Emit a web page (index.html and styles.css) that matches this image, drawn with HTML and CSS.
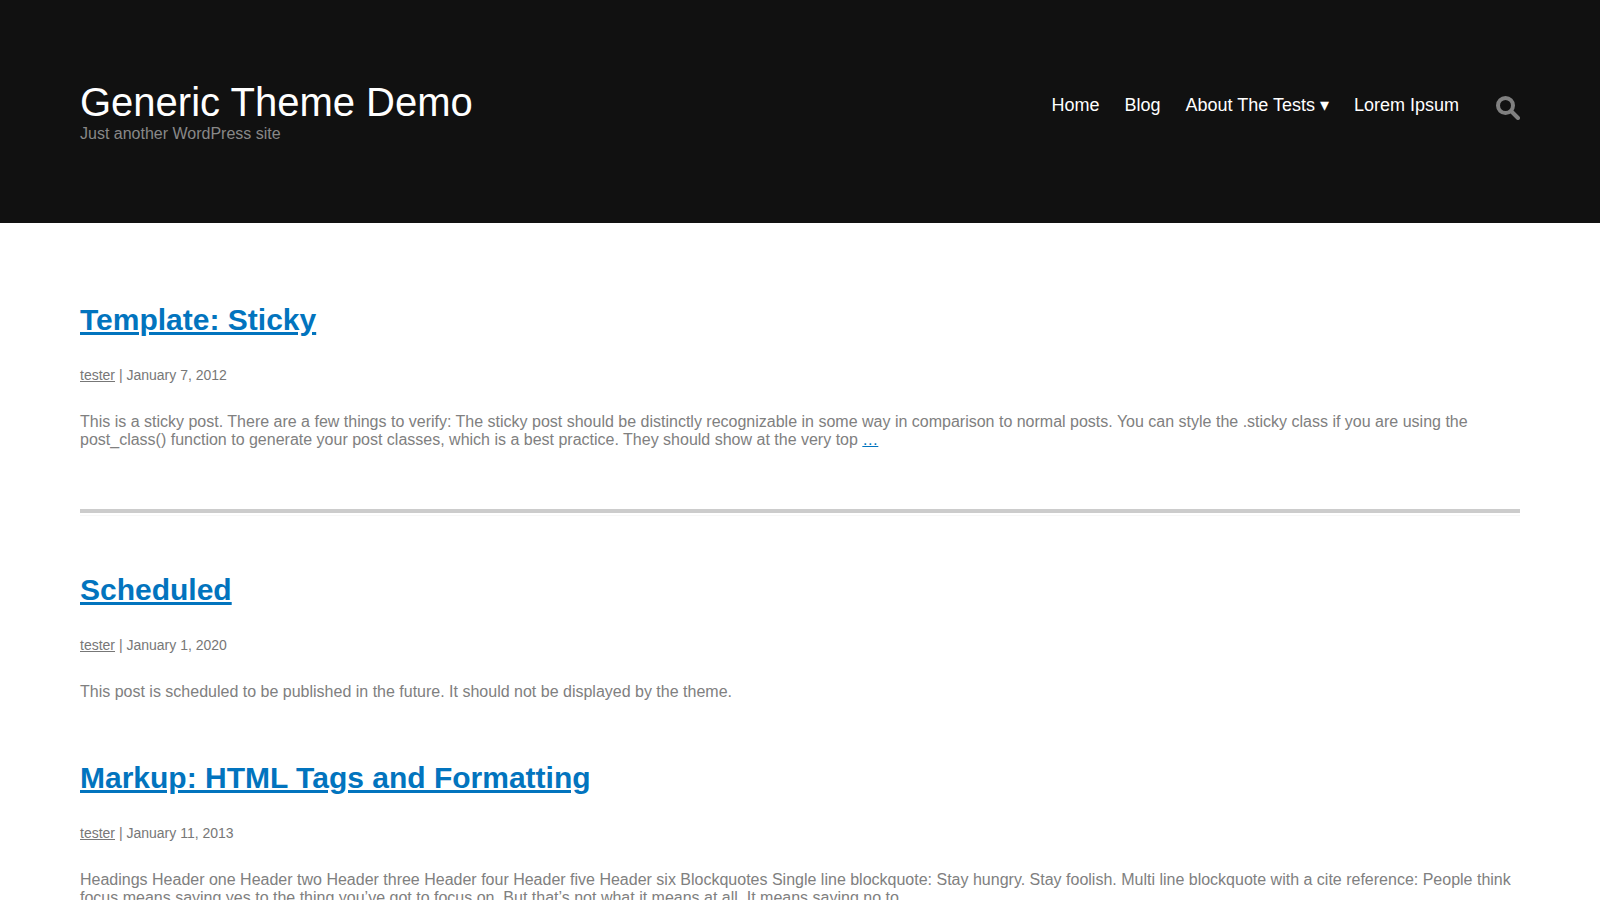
FILE: index.html
```html
<!DOCTYPE html>
<html lang="en">
<head>
<meta charset="utf-8">
<title>Generic Theme Demo</title>
<link rel="stylesheet" href="styles.css">
</head>
<body>
<header class="site-header">
  <div class="branding">
    <h1 class="site-title">Generic Theme Demo</h1>
    <p class="tagline">Just another WordPress site</p>
  </div>
  <nav class="nav">
    <a href="#">Home</a>
    <a href="#">Blog</a>
    <a href="#">About The Tests ▾</a>
    <a href="#">Lorem Ipsum</a>
    <svg class="search" viewBox="0 0 24 24" aria-hidden="true"><circle cx="9.5" cy="9.5" r="7.5" fill="none" stroke="currentColor" stroke-width="4"/><path d="M15.5 15.5l6.5 6.5" fill="none" stroke="currentColor" stroke-width="4" stroke-linecap="round"/></svg>
  </nav>
</header>
<main class="content">
  <article class="post">
    <h2 class="post-title"><a href="#">Template: Sticky</a></h2>
    <p class="meta"><a href="#">tester</a> | January 7, 2012</p>
    <p class="excerpt">This is a sticky post. There are a few things to verify: The sticky post should be distinctly recognizable in some way in comparison to normal posts. You can style the .sticky class if you are using the post_class() function to generate your post classes, which is a best practice. They should show at the very top <a href="#">…</a></p>
  </article>
  <hr class="rule">
  <article class="post">
    <h2 class="post-title"><a href="#">Scheduled</a></h2>
    <p class="meta"><a href="#">tester</a> | January 1, 2020</p>
    <p class="excerpt">This post is scheduled to be published in the future. It should not be displayed by the theme.</p>
  </article>
  <article class="post">
    <h2 class="post-title"><a href="#">Markup: HTML Tags and Formatting</a></h2>
    <p class="meta"><a href="#">tester</a> | January 11, 2013</p>
    <p class="excerpt">Headings Header one Header two Header three Header four Header five Header six Blockquotes Single line blockquote: Stay hungry. Stay foolish. Multi line blockquote with a cite reference: People think focus means saying yes to the thing you’ve got to focus on. But that’s not what it means at all. It means saying no to</p>
  </article>
</main>
</body>
</html>
```
FILE: styles.css
```css
html, body { margin: 0; height: 100%; overflow: hidden; }
body { font-family: "Liberation Sans", Arial, sans-serif; background: #fff; color: #808080; }
.site-header { background: #111; height: 223px; box-sizing: border-box; padding: 79px 80px 0; display: flex; justify-content: space-between; align-items: flex-start; }
.site-title { margin: 0; font-size: 40px; line-height: 46px; font-weight: 400; color: #fff; }
.tagline { margin: 0; font-size: 16px; line-height: 18px; color: #888; }
.nav { display: flex; align-items: flex-start; gap: 25px; padding-top: 16px; font-size: 18px; line-height: 21px; }
.nav a { color: #fff; text-decoration: none; }
.search { width: 24px; height: 24px; margin: 1px 0 0 12px; color: #808080; }
.content { padding: 0 80px; }
.post { padding-top: 60px; }
.post:first-child { padding-top: 80px; }
.post-title { margin: 0; font-size: 30px; line-height: 34px; font-weight: 700; }
.post-title a { color: #0274be; }
.meta { margin: 30px 0 0; font-size: 14px; line-height: 16px; color: #777; }
.meta a { color: #777; }
.excerpt { margin: 30px 0 0; font-size: 16px; line-height: 18px; color: #808080; }
.excerpt a { color: #0274be; }
.rule { margin: 60px 0 0; height: 4px; border: 0; background: #ccc; box-shadow: 0 2px 0 #fff, 0 3px 0 #f7f7f7; }
```
